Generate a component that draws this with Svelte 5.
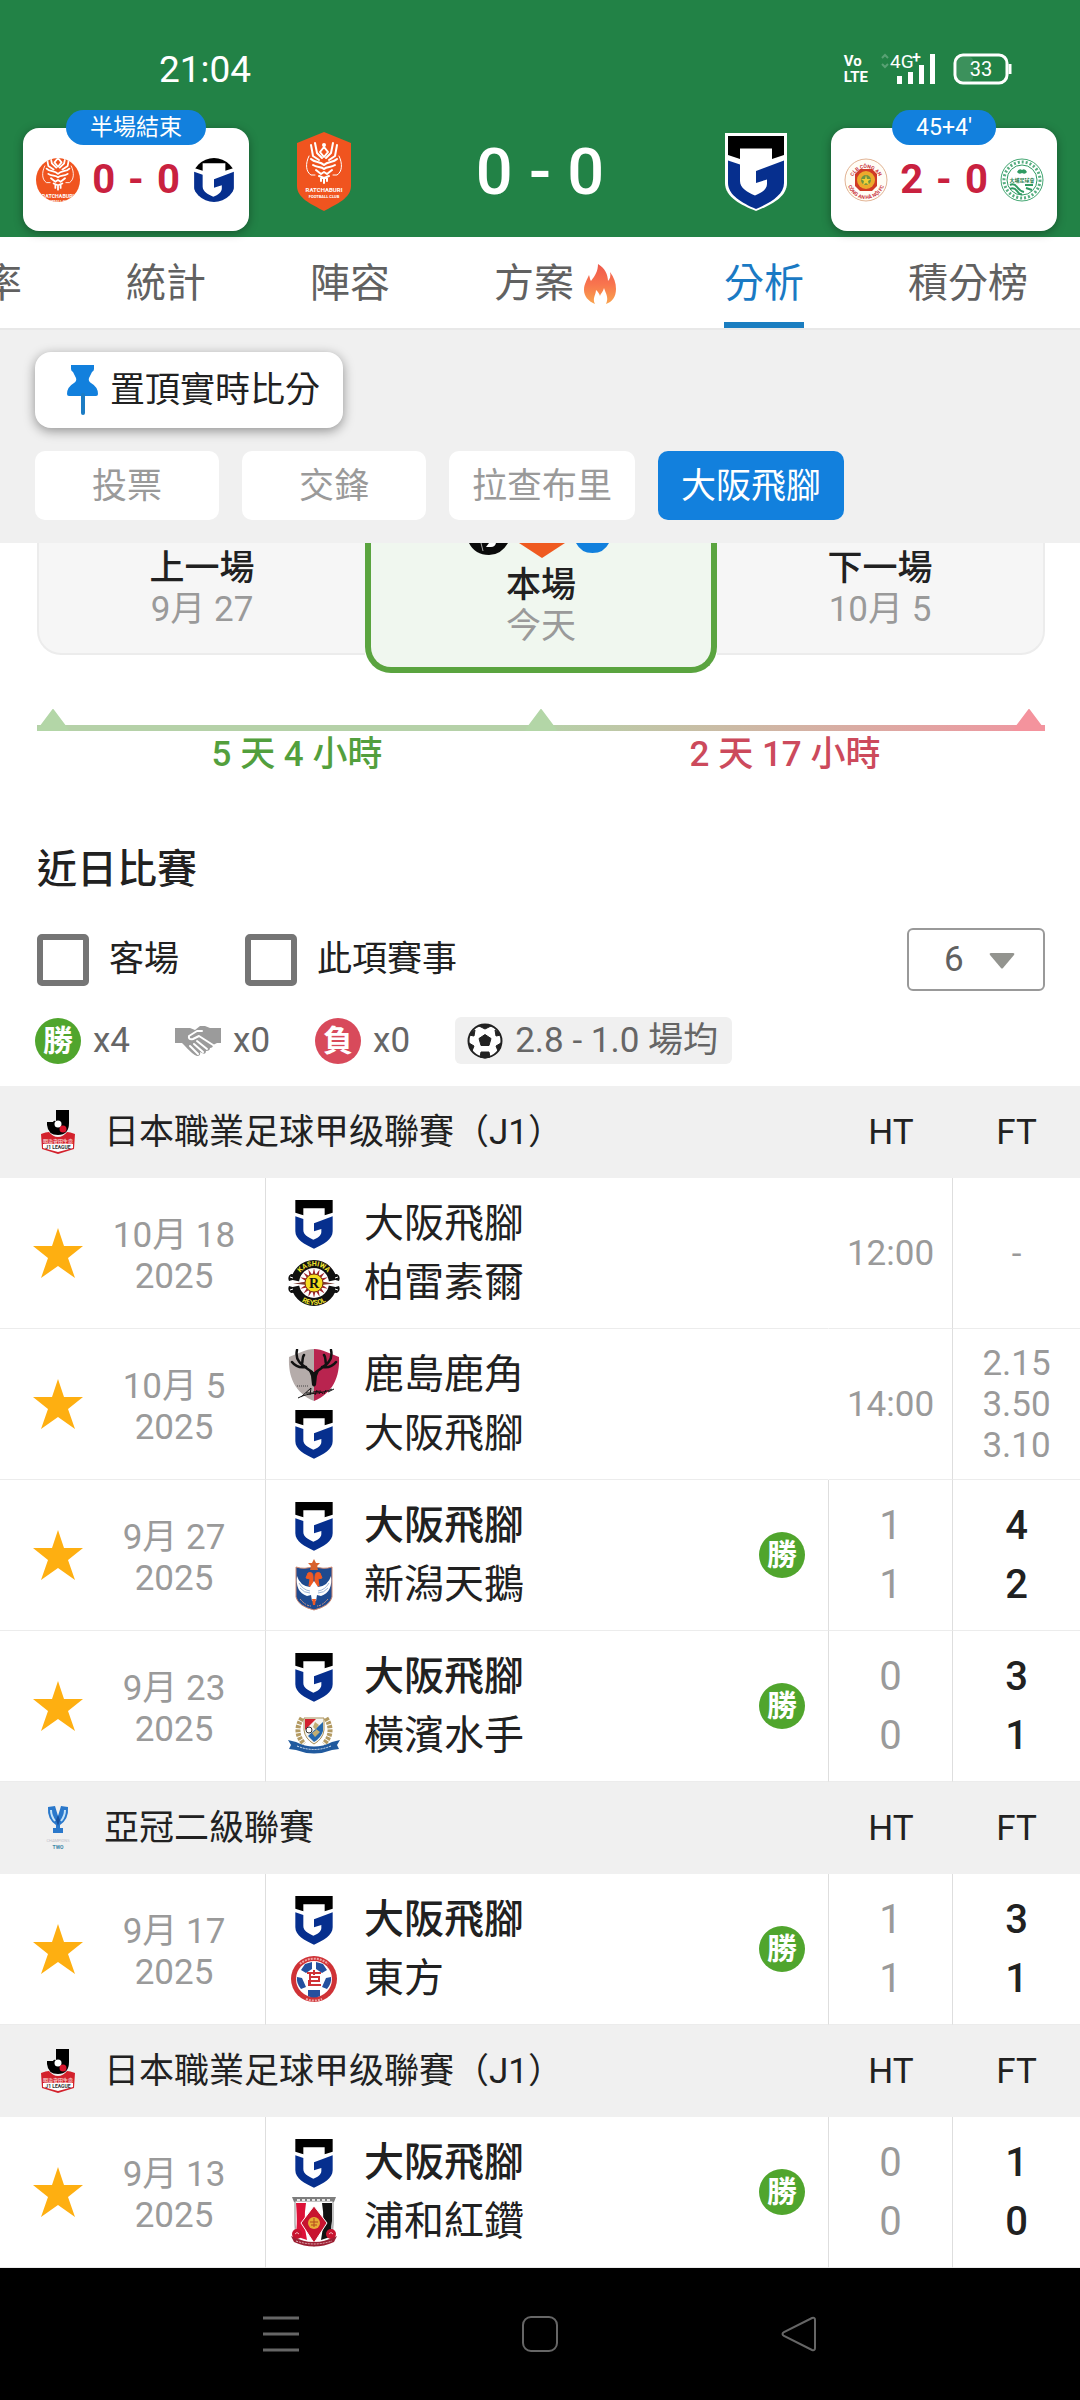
<script lang="ts">
  type Side = { logo: string; name: string; strong?: boolean };
  type Match = {
    date: string;
    home: Side;
    away: Side;
    win?: boolean;
    time?: string;
    odds?: string[];
    ht?: number[];
    ft?: number[];
  };
  type League = { logo: string; name: string; matches: Match[] };

  const gamba = { logo: 'gamba', name: '大阪飛腳' };
  const gambaWin = { ...gamba, strong: true };

  const leagues: League[] = [
    {
      logo: 'jleague',
      name: '日本職業足球甲级聯賽（J1）',
      matches: [
        { date: '10月 18', home: gamba, away: { logo: 'kashiwa', name: '柏雷素爾' }, time: '12:00', odds: ['-'] },
        { date: '10月 5', home: { logo: 'kashima', name: '鹿島鹿角' }, away: gamba, time: '14:00', odds: ['2.15', '3.50', '3.10'] },
        { date: '9月 27', home: gambaWin, away: { logo: 'albirex', name: '新潟天鵝' }, win: true, ht: [1, 1], ft: [4, 2] },
        { date: '9月 23', home: gambaWin, away: { logo: 'marinos', name: '橫濱水手' }, win: true, ht: [0, 0], ft: [3, 1] }
      ]
    },
    {
      logo: 'acl',
      name: '亞冠二級聯賽',
      matches: [
        { date: '9月 17', home: gambaWin, away: { logo: 'eastern', name: '東方' }, win: true, ht: [1, 1], ft: [3, 1] }
      ]
    },
    {
      logo: 'jleague',
      name: '日本職業足球甲级聯賽（J1）',
      matches: [
        { date: '9月 13', home: gambaWin, away: { logo: 'urawa', name: '浦和紅鑽' }, win: true, ht: [0, 0], ft: [1, 0] }
      ]
    }
  ];

  const tabs = ['賠率', '統計', '陣容', '方案', '分析', '積分榜'];
  const chips = ['投票', '交鋒', '拉查布里', '大阪飛腳'];
  const rays = Array.from({ length: 16 }, (_, i) => i * 22.5);

  let activeTab = $state('分析');
  let activeChip = $state('大阪飛腳');
  let awayOnly = $state(false);
  let thisLeague = $state(false);
  let count = $state('6');
</script>

{#snippet gambaArt()}
  <path d="M0 0H62V50C62 64 46 72 31 78C16 72 0 64 0 50Z" fill="#fff" />
  <path d="M3 3H59V22L47 26V15.5H15V26L3 22Z" fill="#000" />
  <path d="M3 27.500L15 31.500V48C15 55 22 59 30 62.500C37 60 42 56 42 51V46.500L31 50V38L59 27.500V50C59 62 45 70 31 76C17 70 3 62 3 50Z" fill="#062f8e" />
{/snippet}

{#snippet ratchaArt()}
  <path d="M27 0L54 11V54C54 66 40 72 27 79C14 72 0 66 0 54V11Z" fill="#f0541f" />
  <g fill="none" stroke="#fff" stroke-width="2" stroke-linecap="round" stroke-linejoin="round">
    <path d="M14 13L16 24L22 28M18 11L20 21L25 26M40 13L38 24L32 28M36 11L34 21L29 26M23 20L27 15L31 20L27 25Z" />
    <path d="M12 24C8 32 9 40 14 43H18M42 24C46 32 45 40 40 43H36" stroke-width="1" />
    <path d="M14 27C18 31 23 29 27 33C31 29 36 31 40 27M16 33C20 36 24 34 27 37C30 34 34 36 38 33M19 38L24 42L27 40L30 42L35 38M22 44L27 46L32 44M24 45V49M27 46V51M30 45V49" />
  </g>
  <circle cx="27" cy="13" r="2" fill="#fff" />
  <text x="27" y="60" text-anchor="middle" font-size="6" font-weight="700" fill="#fff">RATCHABURI</text>
  <text x="27" y="66" text-anchor="middle" font-size="4" font-weight="700" fill="#fff">FOOTBALL CLUB</text>
{/snippet}

{#snippet ballArt()}
  <circle cx="18" cy="18" r="16.500" fill="#fff" stroke="#222" stroke-width="2" />
  <path d="M18 11.500L24 15.500L22 22.500H14L12 15.500ZM12 3L18 6L24 3Q18 0 12 3ZM2 12L7 13L8 7Q4 9 2 12ZM34 12L29 13L28 7Q32 9 34 12ZM5 28L7 23L2 20Q2 25 5 28ZM31 28L29 23L34 20Q34 25 31 28ZM13 34L14 29H22L23 34Q18 36 13 34Z" fill="#222" stroke="#222" stroke-width="1" />
{/snippet}

{#snippet crest(name: string)}
  {#if name === 'gamba'}
    <svg class="crest" viewBox="-8 0 78 78" aria-hidden="true">{@render gambaArt()}</svg>
  {:else if name === 'kashiwa'}
    <svg class="crest" viewBox="0 0 52 52" aria-hidden="true">
      <defs>
        <path id="ringTop" d="M9 26A17 17 0 0 1 43 26" />
        <path id="ringLow" d="M4 26A22 22 0 0 0 48 26" />
      </defs>
      <circle cx="26" cy="26" r="19" fill="#fff" stroke="#111" stroke-width="8" />
      <path d="M0 22L14 25V28L0 31ZM52 22L38 25V28L52 31Z" fill="#fff" />
      <path d="M8 22L1 24Q-1 19 3 17Q6 17 8 18ZM44 22L51 24Q53 19 49 17Q46 17 44 18ZM8 31L1 29Q-1 34 3 36Q6 36 8 35ZM44 31L51 29Q53 34 49 36Q46 36 44 35Z" fill="#111" />
      <path d="M2 20L5 21M50 20L47 21M2 33L5 32M50 33L47 32" stroke="#fff" stroke-width="1" />
      {#each rays as r}
        <path d="M24.500 18L26 11L27.500 18Z" fill="#a2242a" transform="rotate({r} 26 26)" />
      {/each}
      <path d="M5 26.500L19 25V28ZM47 26.500L33 25V28Z" fill="#7a3a30" />
      <circle cx="26" cy="26" r="9" fill="#f5dc1e" stroke="#7a3510" stroke-width="1" />
      <text x="26" y="31" text-anchor="middle" font-size="14" font-weight="700" font-family="Liberation Serif, serif" fill="#111">R</text>
      <text font-size="7" font-weight="700" fill="#f0e32e"><textPath href="#ringTop" startOffset="50%" text-anchor="middle">KASHIWA</textPath></text>
      <text font-size="7" font-weight="700" fill="#f0e32e"><textPath href="#ringLow" startOffset="50%" text-anchor="middle">REYSOL</textPath></text>
    </svg>
  {:else if name === 'kashima'}
    <svg class="crest" viewBox="0 0 52 52" aria-hidden="true">
      <path d="M26 0C18 0 9 5 1 8C0 28 7 44 26 52Z" fill="#b5acaa" />
      <path d="M26 0C34 0 43 5 51 8C52 28 45 44 26 52Z" fill="#b9244f" />
      <g fill="none" stroke="#111" stroke-width="2.500" stroke-linecap="round">
        <path d="M24 23C18 18 6 14 9 1M18 18C12 19 7 17 4 13M14 15C15 11 14 8 16 6" />
        <path d="M28 23C34 18 46 14 43 1M34 18C40 19 45 17 48 13M38 15C37 11 38 8 36 6" />
      </g>
      <path d="M21 22L25 23H27L31 22L29 27L28 36Q26 39 24 36L23 27Z" fill="#111" />
      <path d="M13 48L23 39L22 46M18 44H26M27 46L29 41M25 43L33 42M31 45Q33 41 35 45M36 45L38 41M40 43L46 40M10 49C20 43 36 45 44 40" fill="none" stroke="#111" stroke-width="1" />
      <path d="M9 37H21" stroke="#444" stroke-width="1" stroke-dasharray="1 1" />
    </svg>
  {:else if name === 'albirex'}
    <svg class="crest" viewBox="0 0 52 52" aria-hidden="true">
      <path d="M8 8Q17 11 26 7Q35 11 44 8V38Q42 47 26 51Q10 47 8 38Z" fill="#1f4a8f" stroke="#d08a72" stroke-width="1" />
      <path d="M26 0L28 4L32 4L29 7L30 11H22L23 7L20 4L24 4Z" fill="#d8622f" />
      <path d="M20 14Q25 12 25 18V27H21L22 20L18 19ZM32 14Q27 12 27 18V27H31L30 20L34 19Z" fill="#ef5a24" stroke="#ef5a24" stroke-width="1" />
      <path d="M9 17Q12 27 22 28L26 22L30 28Q40 27 43 17Q45 33 33 37L29 36L28 42H24L23 36L19 37Q7 33 9 17Z" fill="#fff" />
      <path d="M11 24Q15 31 22 32M12 29Q16 34 22 34M41 24Q37 31 30 32M40 29Q36 34 30 34" fill="none" stroke="#9fb6d8" stroke-width="1" />
      <path d="M24 40H28L27 46H25Z" fill="#ef5a24" />
      <path d="M12 40Q18 47 23 47M40 40Q34 47 29 47" fill="none" stroke="#d99a86" stroke-width="1" stroke-dasharray="2 1" />
    </svg>
  {:else if name === 'marinos'}
    <svg class="crest" viewBox="0 0 52 52" aria-hidden="true">
      <path d="M14 8Q5 22 16 34M38 8Q47 22 36 34" fill="none" stroke="#b39a62" stroke-width="5" stroke-dasharray="3 1" />
      <path d="M16 8H36V20Q35 29 26 34Q17 29 16 20Z" fill="#f4f4f0" stroke="#a88f58" stroke-width="1" />
      <path d="M17 9H28L17 20Z" fill="#d3202f" />
      <path d="M35 12V21Q33 28 26 32L20 26Z" fill="#2467ad" />
      <path d="M27 12L31 15L28 19L32 22L27 27L24 23L28 20L25 17Z" fill="#c1ae72" />
      <circle cx="21" cy="20" r="3" fill="#fff" stroke="#333" stroke-width="1" />
      <path d="M0 30L8 32Q26 41 44 32L52 30L49 35L51 39L44 40Q26 47 8 40L1 39L3 35Z" fill="#215a9e" />
      <path d="M9 36Q26 43 43 36" fill="none" stroke="#dfe8f4" stroke-width="1" stroke-dasharray="2 1" />
    </svg>
  {:else if name === 'eastern'}
    <svg class="crest" viewBox="0 0 52 52" aria-hidden="true">
      <circle cx="26" cy="26" r="23" fill="#cf3236" />
      <circle cx="26" cy="26" r="18" fill="#fff" />
      <path d="M17 11L24 9V16L18 20L13 17ZM35 11L28 9V16L34 20L39 17ZM9 24L14 25L18 34L13 36Q8 30 9 24ZM43 24L38 25L34 34L39 36Q44 30 43 24ZM20 37H32L32 43Q26 46 20 43Z" fill="#24509f" />
      <path d="M19 20H33M21 24H31V28H21V32H33M22 20V32M26 17V22" fill="none" stroke="#cf3236" stroke-width="2" />
      <path d="M12 11A21 21 0 0 1 40 11M18 46A21 21 0 0 0 34 46" fill="none" stroke="#eea5a5" stroke-width="2" stroke-dasharray="2 1" />
    </svg>
  {:else if name === 'urawa'}
    <svg class="crest" viewBox="0 0 52 52" aria-hidden="true">
      <path d="M4 1H48L46 6H6Z" fill="#7d7d7d" />
      <path d="M7 5H45V28Q44 38 47 41L26 50L5 41Q8 38 7 28Z" fill="#fff" stroke="#888" stroke-width="1" />
      <path d="M8 7H18Q15 25 19 44L7 40Q10 32 8 7Z" fill="#dd1238" />
      <path d="M34 7H44V25Q42 36 45 40L33 44Q37 24 34 7Z" fill="#111" />
      <path d="M26 10L39 27L26 47L13 27Z" fill="#c8142f" stroke="#fff" stroke-width="1" />
      <circle cx="26" cy="27" r="6" fill="#e8ac35" />
      <path d="M22 26H30M23 29H29M26 22V31" stroke="#b3491d" stroke-width="1" />
      <circle cx="9" cy="38" r="5" fill="#c8142f" />
      <circle cx="43" cy="38" r="5" fill="#c8142f" />
      <path d="M7 38Q9 35 11 38M41 38Q43 35 45 38" fill="none" stroke="#f3b9c0" stroke-width="1" />
      <path d="M3 40Q26 52 49 40L46 46Q26 55 6 46Z" fill="#9c1f33" />
      <path d="M8 45Q26 51 44 45" fill="none" stroke="#e6b4ba" stroke-width="1" stroke-dasharray="2 1" />
      <path d="M9 4H43" stroke="#e8e8e8" stroke-width="2" stroke-dasharray="3 2" />
    </svg>
  {/if}
{/snippet}

{#snippet leagueLogo(name: string)}
  {#if name === 'jleague'}
    <svg class="league-logo" viewBox="0 0 34 44" aria-hidden="true">
      <path d="M15 0H28V13Q28 25 17 25Q7 25 6 15V12H12Q13 10 15 11Z" fill="#000" />
      <circle cx="17" cy="14" r="3.500" fill="#fff" />
      <circle cx="22" cy="19" r="3.500" fill="#d9142c" />
      <path d="M0 24Q5 22 8 22Q12 27 17 27Q22 27 26 22Q29 22 34 24L33 39L17 44L1 39Z" fill="#d3212c" />
      <path d="M2 34H32V38L17 42L2 38Z" fill="#fff" />
      <text x="17" y="32.500" text-anchor="middle" font-size="5" font-weight="700" fill="#f6caca">明治安田生命</text>
      <text x="17" y="39" text-anchor="middle" font-size="5" font-weight="700" fill="#333">J1 LEAGUE</text>
    </svg>
  {:else}
    <svg class="league-logo" viewBox="0 0 34 44" aria-hidden="true">
      <path d="M7 1L14 0L17 10L20 0L27 1Q28 13 19 19V22H22V27H12V22H15V19Q6 13 7 1Z" fill="#2a78cb" />
      <path d="M10 4Q10 10 14 15M24 4Q24 10 20 15" fill="none" stroke="#c3e2f8" stroke-width="2" />
      <path d="M15 14L17 9L19 14L17 20Z" fill="#17509d" />
      <text x="17" y="36" text-anchor="middle" font-size="4" fill="#c0c0c8">CHAMPIONS</text>
      <text x="17" y="43" text-anchor="middle" font-size="5" font-weight="700" fill="#3b87a8">TWO</text>
    </svg>
  {/if}
{/snippet}

<div class="page">
  <header class="top">
    <div class="status">
      <span class="clock">21:04</span>
      <span class="volte"><span>Vo</span><span>LTE</span></span>
      <svg class="signal" viewBox="0 -8 58 50" role="img" aria-label="4G+">
        <path d="M3 6L6 3L9 6M3 12L6 15L9 12" fill="none" stroke="#fff" stroke-opacity=".25" stroke-width="2" />
        <text x="11" y="16" font-size="19" fill="#fff">4G</text>
        <text x="33" y="11" font-size="16" font-weight="500" fill="#fff">+</text>
        <path d="M18 24H23V32H18ZM29 20H34V32H29ZM40 13H45V32H40ZM51 2H56V32H51Z" fill="#fff" />
      </svg>
      <svg class="battery" viewBox="0 0 60 34" role="img" aria-label="33%">
        <rect x="5" y="5" width="16" height="24" rx="4" fill="#fff" fill-opacity=".12" />
        <rect x="3" y="3" width="52" height="28" rx="8" fill="none" stroke="#fff" stroke-width="3" />
        <path d="M58 12V22" stroke="#fff" stroke-width="3" />
        <text x="29" y="24" font-size="20" text-anchor="middle" fill="#fff">33</text>
      </svg>
    </div>

    <div class="scores">
      <a class="mini" href="#match-1">
        <span class="badge">半場結束</span>
        <svg class="round" viewBox="2 14 50 52" preserveAspectRatio="xMidYMid slice" aria-hidden="true">{@render ratchaArt()}</svg>
        <strong><span>0</span><span>-</span><span>0</span></strong>
        <svg class="round" viewBox="0 8 62 62" aria-hidden="true">{@render gambaArt()}</svg>
      </a>
      <div class="main-score">
        <svg class="team-ratcha" viewBox="0 0 54 79" role="img" aria-label="拉查布里">{@render ratchaArt()}</svg>
        <strong>0 - 0</strong>
        <svg class="team-gamba" viewBox="0 0 62 78" role="img" aria-label="大阪飛腳">{@render gambaArt()}</svg>
      </div>
      <a class="mini" href="#match-2">
        <span class="badge">45+4'</span>
        <svg class="round" viewBox="0 0 44 44" aria-hidden="true">
          <defs>
            <path id="arcTop" d="M8 24A14 14 0 0 1 36 24" />
            <path id="arcLow" d="M3 22A19 19 0 0 0 41 22" />
          </defs>
          <circle cx="22" cy="22" r="21" fill="#fffdf6" stroke="#e0b090" stroke-width="1" />
          <text font-size="5" font-weight="700" fill="#c93440"><textPath href="#arcTop" startOffset="50%" text-anchor="middle">CLB CÔNG AN</textPath></text>
          <text font-size="5" font-weight="700" fill="#c93440"><textPath href="#arcLow" startOffset="50%" text-anchor="middle">CÔNG AN HÀ NỘI FC</textPath></text>
          <path d="M11 16L16 11H28L33 16V28L28 33H16L11 28Z" fill="#cf3a26" />
          <circle cx="22" cy="22" r="9" fill="#ecaa2c" />
          <circle cx="22" cy="22" r="5" fill="#6f9440" />
          <path d="M22 17L23 21H27L24 23L25 27L22 25L19 27L20 23L17 21H21Z" fill="#f0cf36" />
        </svg>
        <strong><span>2</span><span>-</span><span>0</span></strong>
        <svg class="round" viewBox="0 0 44 44" aria-hidden="true">
          <circle cx="22" cy="22" r="21" fill="#fff" stroke="#3da36d" stroke-width="1" />
          <circle cx="22" cy="22" r="18" fill="none" stroke="#57ae80" stroke-width="3" stroke-dasharray="2 2" />
          <circle cx="22" cy="22" r="15" fill="#fff" stroke="#2f9a62" stroke-width="1" />
          <path d="M17 14Q19 10 22 12Q25 10 27 14Q25 17 22 15Q19 17 17 14Z" fill="#2f9a62" />
          <text x="22" y="24" text-anchor="middle" font-size="5" font-weight="700" fill="#1f7d4c">大埔足球會</text>
          <path d="M10 27Q14 25 17 29T24 34M10 31Q14 29 17 33T22 36M25 27H33M26 30L32 32" fill="none" stroke="#2f9a62" stroke-width="2" />
        </svg>
      </a>
    </div>
  </header>

  <nav class="tabs" aria-label="比賽">
    {#each tabs as tab}
      <button class:active={tab === activeTab} onclick={() => (activeTab = tab)}>
        {tab}
        {#if tab === '方案'}
          <svg class="fire" viewBox="0 0 32 40" aria-hidden="true">
            <defs>
              <linearGradient id="flame" x1="0" y1="0" x2="0" y2="1">
                <stop offset="0" stop-color="#ee5a4c" />
                <stop offset=".5" stop-color="#f8744e" />
                <stop offset="1" stop-color="#f9a44e" />
              </linearGradient>
            </defs>
            <path d="M14 0C21 4 24 11 24 17C26 15 27 12 26 8C30 13 32 19 32 25C32 33 28 38 22 40C25 34 22 30 20 24C19 28 17 29 16 32C15 29 14 28 12 26C12 31 8 34 11 40C4 37 0 32 0 26C0 20 3 16 5 11C6 14 6 16 7 17C11 12 14 7 14 0Z" fill="url(#flame)" />
          </svg>
        {/if}
      </button>
    {/each}
  </nav>

  <section class="tools">
    <button class="pin">
      <svg viewBox="0 0 32 50" aria-hidden="true">
        <path d="M4 0H27V4Q27 6 25 7L22 13Q21 16 24 18Q31 22 31 29Q31 31 29 31H2Q0 31 0 29Q0 22 7 18Q10 16 9 13L6 7Q4 6 4 4Z" fill="#1280dd" />
        <path d="M16 30V48" stroke="#1c7cc4" stroke-width="4" stroke-linecap="round" />
      </svg>
      置頂實時比分
    </button>
    <div class="chips">
      {#each chips as chip}
        <button class:active={chip === activeChip} onclick={() => (activeChip = chip)}>{chip}</button>
      {/each}
    </div>
  </section>

  <main>
    <section class="schedule">
      <div class="slot side-left"><b>上一場</b><span>9月 27</span></div>
      <div class="slot now">
        <svg viewBox="0 0 144 16" aria-hidden="true">
          <path d="M0 0H39Q32 12 20 12Q6 12 0 0Z" fill="#0a0a0a" />
          <path d="M20 0H27Q26 4 22 4H17Z" fill="#fff" />
          <path d="M12 0L14 8" stroke="#aaa" stroke-width="1" />
          <path d="M50 0H96L73 15Z" fill="#ef5a20" />
          <path d="M107 0H140Q135 10 123.500 10Q112 10 107 0Z" fill="#1280dd" />
        </svg>
        <b>本場</b><span>今天</span>
      </div>
      <div class="slot side-right"><b>下一場</b><span>10月 5</span></div>
    </section>

    <div class="track">
      <svg viewBox="0 0 32 22" aria-hidden="true"><path d="M16 1L31 21H1Z" fill="#b3d6a7" stroke="#b3d6a7" stroke-width="2" stroke-linejoin="round" /></svg>
      <svg viewBox="0 0 32 22" aria-hidden="true"><path d="M16 1L31 21H1Z" fill="#b3d6a7" stroke="#b3d6a7" stroke-width="2" stroke-linejoin="round" /></svg>
      <svg viewBox="0 0 32 22" aria-hidden="true"><path d="M16 1L31 21H1Z" fill="#f4939d" stroke="#f4939d" stroke-width="2" stroke-linejoin="round" /></svg>
    </div>
    <div class="spans">
      <span class="green">5 天 4 小時</span>
      <span class="red">2 天 17 小時</span>
    </div>

    <h2>近日比賽</h2>

    <div class="filters">
      <label><input type="checkbox" bind:checked={awayOnly} />客場</label>
      <label><input type="checkbox" bind:checked={thisLeague} />此項賽事</label>
      <div class="picker">
        <select bind:value={count} aria-label="場數">
          <option>6</option>
          <option>10</option>
          <option>20</option>
        </select>
        <svg viewBox="0 0 26 17" aria-hidden="true"><path d="M2 1H24Q26 1 25 3L14 16Q13 17 12 16L1 3Q0 1 2 1Z" fill="#93948f" /></svg>
      </div>
    </div>

    <div class="stats">
      <span class="stat"><i class="result">勝</i>x4</span>
      <span class="stat">
        <svg class="shake" viewBox="0 0 46 30" aria-hidden="true">
          <path d="M0 2H15L20 4L25 0H30L35 2H46V17H42L38 19Q38 22 35 22Q35 25 31 25Q31 29 27 27L25 26Q26 30 22 30Q18 29 9 19L7 17H0Z" fill="#9b9b9b" />
          <path d="M27 5H22L14 10Q13 14 18 13L24 10L38 19M22 15L32 23M19 18L28 26M15 20L23 28" fill="none" stroke="#fff" stroke-width="2" stroke-linecap="round" stroke-linejoin="round" />
        </svg>x0
      </span>
      <span class="stat"><i class="result loss">負</i>x0</span>
      <span class="avg"><svg viewBox="0 0 36 36" aria-hidden="true">{@render ballArt()}</svg>2.8 - 1.0 場均</span>
    </div>
  </main>

  <table>
    <colgroup>
      <col class="c-star" /><col class="c-date" /><col /><col class="c-ht" /><col class="c-ft" />
    </colgroup>
    {#each leagues as league}
      <tbody>
        <tr class="league">
          <th colspan="3" scope="colgroup">
            <div class="league-name">{@render leagueLogo(league.logo)}{league.name}</div>
          </th>
          <th scope="col">HT</th>
          <th scope="col">FT</th>
        </tr>
        {#each league.matches as m}
          <tr class="match">
            <td class="star">
              <button aria-label="收藏">
                <svg viewBox="0 0 50 50" aria-hidden="true"><path d="M25 0L31 18H50L35 30L42 50L25 38L8 50L15 30L0 18H19Z" fill="#feaf11" /></svg>
              </button>
            </td>
            <td class="date">{m.date}<br />2025</td>
            <td class="teams" class:open={m.time}>
              <div class="teams-row">
                <div>
                  {#each [m.home, m.away] as side}
                    <div class="team" class:strong={side.strong}>{@render crest(side.logo)}{side.name}</div>
                  {/each}
                </div>
                {#if m.win}<i class="result">勝</i>{/if}
              </div>
            </td>
            {#if m.time}
              <td class="time">{m.time}</td>
              <td class="odds">{#each m.odds ?? [] as o}<div>{o}</div>{/each}</td>
            {:else}
              <td class="ht">{#each m.ht ?? [] as g}<div>{g}</div>{/each}</td>
              <td class="ft">{#each m.ft ?? [] as g}<div>{g}</div>{/each}</td>
            {/if}
          </tr>
        {/each}
      </tbody>
    {/each}
  </table>

  <footer>
    <button aria-label="最近"><svg viewBox="0 0 36 36"><path d="M0 2H36M0 18H36M0 34H36" stroke="#666" stroke-width="3" /></svg></button>
    <button aria-label="主頁"><svg viewBox="0 0 36 36"><rect x="1" y="1" width="34" height="34" rx="8" fill="none" stroke="#666" stroke-width="2" /></svg></button>
    <button aria-label="返回"><svg viewBox="0 0 36 36"><path d="M31 2Q34 1 34 4V32Q34 35 31 34L3 20Q0 18 3 16Z" fill="none" stroke="#666" stroke-width="2" /></svg></button>
  </footer>
</div>

<style>
  :global(body) {
    margin: 0;
    background: #fff;
  }
  .page {
    font-family: Roboto, 'Noto Sans CJK TC', sans-serif;
    font-size: 35px;
    line-height: 41px;
    color: #212121;
    overflow: hidden;
  }
  svg {
    display: block;
    flex: none;
  }
  button,
  select {
    font: inherit;
    color: inherit;
    border: 0;
    padding: 0;
    background: none;
  }

  .top {
    background: #228246;
    color: #fff;
  }
  .status {
    display: flex;
    align-items: center;
    height: 82px;
    padding: 28px 68px 0 159px;
  }
  .clock {
    font-size: 37px;
    margin-right: auto;
  }
  .volte {
    display: grid;
    font-size: 15px;
    font-weight: 700;
    line-height: 16px;
    margin-right: 11px;
  }
  .signal {
    width: 58px;
    height: 50px;
    margin-right: 15px;
  }
  .battery {
    width: 60px;
    height: 34px;
  }
  .scores {
    display: grid;
    grid-template-columns: 226px 1fr 226px;
    padding: 18px 23px 6px;
  }
  .mini {
    position: relative;
    display: flex;
    justify-content: space-between;
    align-items: center;
    box-sizing: border-box;
    height: 103px;
    padding: 0 13px;
    background: #fff;
    border-radius: 16px;
    box-shadow: 0 2px 10px rgba(0, 0, 0, 0.35);
    color: #c9213f;
    font-size: 40px;
    text-decoration: none;
  }
  .mini strong {
    display: flex;
    gap: 13px;
  }
  .badge {
    position: absolute;
    top: -18px;
    left: 50%;
    transform: translateX(-50%);
    padding: 0 24px;
    border-radius: 18px;
    background: #1280dd;
    color: #fff;
    font-size: 23px;
    line-height: 35px;
    white-space: nowrap;
  }
  .round {
    width: 44px;
    height: 44px;
    border-radius: 50%;
  }
  .main-score {
    display: grid;
    grid-template-columns: 1fr 282px 1fr;
    align-items: center;
    justify-items: center;
    margin-top: -16px;
  }
  .main-score strong {
    font-size: 65px;
    font-weight: 500;
    line-height: 80px;
  }
  .team-ratcha {
    width: 54px;
    height: 79px;
  }
  .team-gamba {
    width: 62px;
    height: 78px;
  }

  .tabs {
    display: flex;
    justify-content: flex-end;
    border-bottom: 2px solid #e8e8e8;
  }
  .tabs button {
    display: flex;
    flex: none;
    align-items: center;
    margin: 0 52px;
    height: 91px;
    box-sizing: border-box;
    border: solid transparent;
    border-width: 8px 0 6px;
    font-size: 40px;
    color: #616161;
  }
  .tabs .active {
    color: #1a7ac4;
    border-bottom-color: #1a7dc0;
  }
  .fire {
    width: 32px;
    height: 40px;
    margin: 0 4px 0 10px;
  }

  .tools {
    padding: 22px 35px 23px;
    background: #f0f0f0;
  }
  .pin {
    display: flex;
    align-items: center;
    gap: 11px;
    height: 76px;
    padding: 0 23px 0 32px;
    background: #fff;
    border-radius: 16px;
    box-shadow: 0 3px 12px rgba(0, 0, 0, 0.4);
  }
  .pin svg {
    width: 32px;
    height: 50px;
  }
  .chips {
    display: flex;
    gap: 23px;
    margin-top: 23px;
  }
  .chips button {
    min-width: 184px;
    height: 69px;
    padding: 2px 23px 0;
    border-radius: 10px;
    background: #fff;
    color: #9a9a9a;
  }
  .chips .active {
    background: #1280dd;
    color: #fff;
  }

  main {
    padding: 0 35px 22px 37px;
  }
  .schedule {
    display: grid;
    grid-template-columns: 1fr 352px 1fr;
    align-items: start;
  }
  .slot {
    display: grid;
    justify-items: center;
    padding: 5px 0 23px;
    background: #f6f6f6;
    border: solid #ececec;
    border-width: 0 0 2px;
  }
  .slot b {
    font-weight: 500;
  }
  .slot span {
    color: #9a9a9a;
  }
  .side-left {
    border-left-width: 2px;
    border-bottom-left-radius: 24px;
  }
  .side-right {
    border-right-width: 2px;
    border-bottom-right-radius: 24px;
  }
  .now {
    padding: 0 0 20px;
    background: #f0f7ef;
    border: solid #5aa43f;
    border-width: 0 6px 6px;
    border-radius: 0 0 26px 26px;
  }
  .now svg {
    width: 144px;
    height: 16px;
    margin-bottom: 6px;
  }
  .track {
    display: flex;
    justify-content: space-between;
    margin-top: 36px;
    background: linear-gradient(90deg, #b5d1a8 50%, #f095a0) bottom / 100% 6px no-repeat;
  }
  .track svg {
    width: 32px;
    height: 22px;
  }
  .spans {
    display: grid;
    grid-template-columns: 1fr 1fr;
    justify-items: center;
    margin-top: 3px;
    padding: 0 16px;
    font-weight: 500;
  }
  .green {
    color: #539f3d;
  }
  .red {
    color: #cc4a5c;
  }
  h2 {
    margin: 71px 0 34px;
    font-size: 40px;
    font-weight: 500;
    line-height: 48px;
  }
  .filters {
    display: flex;
    align-items: center;
    gap: 66px;
  }
  .filters label {
    display: flex;
    align-items: center;
    gap: 20px;
  }
  .filters input {
    appearance: none;
    width: 52px;
    height: 52px;
    margin: 0;
    border: 6px solid #757575;
    border-radius: 5px;
  }
  .filters input:checked {
    background: #1280dd;
  }
  .picker {
    position: relative;
    margin-left: auto;
  }
  .picker select {
    appearance: none;
    box-sizing: border-box;
    width: 138px;
    height: 63px;
    padding-left: 35px;
    border: 2px solid #999;
    border-radius: 6px;
    background: #fff;
    color: #616161;
  }
  .picker svg {
    position: absolute;
    right: 30px;
    top: 24px;
    width: 26px;
    height: 17px;
    pointer-events: none;
  }
  .stats {
    display: flex;
    align-items: center;
    gap: 45px;
    margin: 26px -2px 0;
    color: #666;
  }
  .stat {
    display: flex;
    align-items: center;
    gap: 12px;
  }
  .result {
    display: grid;
    place-items: center;
    width: 46px;
    height: 46px;
    border-radius: 50%;
    background: #50a52d;
    color: #fff;
    font-size: 30px;
    font-style: normal;
    font-weight: 700;
    line-height: 46px;
  }
  .loss {
    background: #d84a5b;
  }
  .shake {
    width: 46px;
    height: 30px;
  }
  .avg {
    display: flex;
    align-items: center;
    gap: 12px;
    height: 47px;
    padding: 0 14px 0 12px;
    border-radius: 6px;
    background: #f0f0f0;
  }
  .avg svg {
    width: 36px;
    height: 36px;
  }

  table {
    width: 100%;
    table-layout: fixed;
    border-collapse: separate;
    border-spacing: 0;
  }
  .c-star {
    width: 83px;
  }
  .c-date {
    width: 183px;
  }
  .c-ht {
    width: 124px;
  }
  .c-ft {
    width: 127px;
  }
  td,
  th {
    padding: 0;
    text-align: center;
    vertical-align: middle;
  }
  .league th {
    height: 92px;
    background: #f0f0f0;
    font-weight: 400;
  }
  .league-name {
    display: flex;
    align-items: center;
    gap: 29px;
    padding-left: 41px;
    white-space: nowrap;
  }
  .league-logo {
    width: 34px;
    height: 44px;
  }
  .match td {
    box-sizing: border-box;
    height: 151px;
    border-bottom: 1px solid #ececec;
  }
  .star button {
    margin-left: 33px;
    display: block;
  }
  .star svg {
    width: 50px;
    height: 50px;
  }
  .date,
  .time,
  .odds,
  .ht {
    color: #9a9a9a;
  }
  .date,
  .teams,
  .time,
  .ht {
    border-right: 1px solid #dedede;
  }
  .match .date {
    padding-top: 5px;
  }
  .match .open {
    border-right-color: transparent;
  }
  .teams-row {
    display: flex;
    align-items: center;
    justify-content: space-between;
    padding: 0 23px 0 22px;
  }
  .team {
    display: flex;
    align-items: center;
    gap: 24px;
    height: 59px;
    font-size: 40px;
    white-space: nowrap;
  }
  .strong {
    font-weight: 500;
  }
  .crest {
    width: 52px;
    height: 52px;
  }
  .ht,
  .ft {
    font-size: 40px;
    line-height: 59px;
  }
  .ft {
    font-weight: 500;
  }

  footer {
    display: grid;
    grid-template-columns: repeat(3, 1fr);
    justify-items: center;
    padding: 48px 14%;
    background: #000;
  }
  footer svg {
    width: 36px;
    height: 36px;
  }
</style>
